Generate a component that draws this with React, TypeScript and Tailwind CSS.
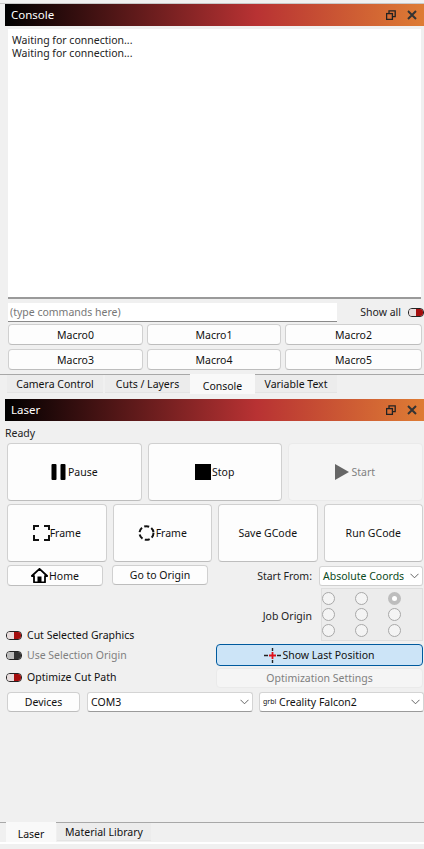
import React from "react";

const font = "[font-family:'Noto_Sans',sans-serif]";

function Header({ title }: { title: string }) {
  return (
    <div className="ml-[5px] h-[22px] flex items-center pl-[6px] pr-[6px] bg-[linear-gradient(90deg,#000000_0%,#b83233_60%,#de7c34_100%)]">
      <span className="text-white text-[11.5px] flex-1">{title}</span>
      <svg width="10" height="10" viewBox="0 0 10 10" className="mr-[11px]" fill="none" stroke="#222" strokeWidth="1.3">
        <rect x="0.6" y="3.6" width="5.8" height="5.8" />
        <path d="M3 3.4V0.8H9.2V6.6H6.6" />
      </svg>
      <svg width="10" height="10" viewBox="0 0 10 10" className="mr-[1px]" fill="none" stroke="#333" strokeWidth="2">
        <path d="M1 1L9 9M9 1L1 9" />
      </svg>
    </div>
  );
}

function Toggle({ off }: { off?: boolean }) {
  return (
    <span className="inline-flex w-[16px] h-[9px] rounded-[4px] border-[1.5px] border-[#222] overflow-hidden shrink-0">
      <span className={`w-[7px] ${off ? "bg-[#bdbdbd]" : "bg-[#e8dcdc]"}`} />
      <span className={`flex-1 ${off ? "bg-[#333]" : "bg-[#a50d0d]"}`} />
    </span>
  );
}

function Btn({ className, children }: { className: string; children: React.ReactNode }) {
  return (
    <div className={`flex items-center justify-center bg-[#fdfdfd] border border-[#d0d0d0] border-b-[#bdbdbd] rounded-[4px] text-[#111] whitespace-nowrap ${className}`}>
      {children}
    </div>
  );
}

function Chevron() {
  return (
    <svg width="9" height="6" viewBox="0 0 9 6" fill="none" stroke="#555" strokeWidth="0.9">
      <path d="M0.5 0.8L4.5 4.8L8.5 0.8" />
    </svg>
  );
}

function Select({ className, children, tone }: { className: string; children: React.ReactNode; tone?: string }) {
  return (
    <div className={`flex items-center justify-between bg-white border border-[#d4d4d4] border-b-[#9a9a9a] rounded-[3px] pl-[3px] pr-[3px] ${tone ?? "text-[#111]"} ${className}`}>
      <span className="whitespace-nowrap">{children}</span>
      <Chevron />
    </div>
  );
}

function Radio({ on }: { on?: boolean }) {
  return on ? (
    <span className="w-[13px] h-[13px] rounded-full bg-[#bdbdbd] flex items-center justify-center">
      <span className="w-[5px] h-[5px] rounded-full bg-white" />
    </span>
  ) : (
    <span className="w-[13px] h-[13px] rounded-full border border-[#a8a8a8] bg-[#f4f4f4]" />
  );
}

export default function App() {
  return (
    <div className={`${font} w-[424px] h-[849px] bg-[#f0f0f0] text-[10.5px] leading-[14px] text-[#111] overflow-hidden`}>
      <div className="h-[4px] border-b border-[#c8c8c8]" />
      <Header title="Console" />

      <div className="ml-[8px] mr-[3px] mt-[3px] h-[270px] bg-white border-b-2 border-[#9a9a9a] pl-[4px] pt-[5px] text-[#222] leading-[13px]">
        <div>Waiting for connection...</div>
        <div>Waiting for connection...</div>
      </div>

      <div className="flex items-center mt-[3px] h-[20px] pl-[8px]">
        <div className="w-[330px] h-[19px] bg-white border-b border-[#8a8a8a] pl-[2px] text-[#777] leading-[18px]">(type commands here)</div>
        <span className="ml-[23px] text-[#222] whitespace-nowrap">Show all</span>
        <span className="ml-[7px]"><Toggle /></span>
      </div>

      <div className="grid grid-cols-[135px_134px_137px] gap-x-[4px] gap-y-[4px] pl-[8px] mt-[2px]">
        {["Macro0", "Macro1", "Macro2", "Macro3", "Macro4", "Macro5"].map((m) => (
          <Btn key={m} className="h-[21px]">{m}</Btn>
        ))}
      </div>

      <div className="mt-[4px] border-t border-[#a8a8a8] h-[20px] flex pl-[7px] items-start">
        <div className="w-[96px] h-[18px] bg-[#ececec] border-b border-[#e4e4e4] flex items-center justify-center mr-[2px]">Camera Control</div>
        <div className="w-[85px] h-[18px] bg-[#ececec] border-b border-[#e4e4e4] flex items-center justify-center">Cuts / Layers</div>
        <div className="w-[65px] h-[20px] -mt-[1px] bg-[#f9f9f9] flex items-center justify-center pt-[3px]">Console</div>
        <div className="w-[82px] h-[18px] bg-[#ececec] border-b border-[#e4e4e4] flex items-center justify-center">Variable Text</div>
      </div>

      <div className="mt-[5px]">
        <Header title="Laser" />
      </div>

      <div className="pl-[5px] mt-[4px] h-[16px] leading-[16px] text-[#222]">Ready</div>

      <div className="flex gap-[6px] pl-[7px] mt-[2px]">
        <Btn className="w-[134.5px] h-[58px] gap-[2px]">
          <svg width="15" height="16" viewBox="0 0 15 16" fill="#000"><rect x="0.5" y="0" width="5" height="16" rx="1" /><rect x="9.5" y="0" width="5" height="16" rx="1" /></svg>
          Pause
        </Btn>
        <Btn className="w-[134.5px] h-[58px] gap-[1px]">
          <svg width="16" height="16" viewBox="0 0 16 16" fill="#000"><rect width="16" height="16" /></svg>
          Stop
        </Btn>
        <div className="w-[134.5px] h-[58px] flex items-center justify-center gap-[2px] bg-[#f5f5f5] rounded-[4px] border border-[#eaeaea] text-[#808080]">
          <svg width="14" height="16" viewBox="0 0 14 16" fill="#666"><path d="M0 0L14 8L0 16Z" /></svg>
          Start
        </div>
      </div>

      <div className="flex gap-[6px] pl-[7px] mt-[3px]">
        <Btn className="w-[99.5px] h-[58px]">
          <svg width="17" height="16" viewBox="0 0 17 16" fill="none" stroke="#111" strokeWidth="2">
            <path d="M1 5V1H6M11 1H16V5M16 10V15H11M6 15H1V10" />
          </svg>
          Frame
        </Btn>
        <Btn className="w-[99.5px] h-[58px]">
          <svg width="17" height="16" viewBox="0 0 17 16" fill="none" stroke="#111" strokeWidth="2" className="mr-[1px]">
            <ellipse cx="8.5" cy="8" rx="7" ry="6.8" strokeDasharray="5 2.5" />
          </svg>
          Frame
        </Btn>
        <Btn className="w-[99.5px] h-[58px]">Save GCode</Btn>
        <Btn className="w-[99.5px] h-[58px]">Run GCode</Btn>
      </div>

      <div className="flex items-center pl-[7px] mt-[3px] h-[21px]">
        <Btn className="w-[96px] h-[21px]">
          <svg width="17" height="15" viewBox="0 0 17 15" className="mr-[1px]">
            <path d="M8.5 0.8L0.8 8H3V14.3H14V8H16.2Z" fill="#fff" stroke="#000" strokeWidth="1.8" strokeLinejoin="round" />
            <rect x="6.5" y="8.5" width="4" height="6" fill="#000" />
          </svg>
          Home
        </Btn>
        <Btn className="w-[96px] h-[20px] ml-[9px] -mt-[1px]">Go to Origin</Btn>
        <span className="w-[104px] text-[#222] text-right whitespace-nowrap">Start From:</span>
        <Select className="ml-[7px] w-[104px] h-[20px] border-b-[#cfcfcf]" tone="text-[#0b4a22]">Absolute Coords</Select>
      </div>

      <div className="flex mt-[2px] h-[99px]">
        <div className="w-[216px] pl-[6px] pt-[39px] shrink-0">
          <div className="flex items-center gap-[5px] h-[16px] text-[#111]"><Toggle />Cut Selected Graphics</div>
          <div className="flex items-center gap-[5px] h-[16px] mt-[4px] text-[#808080]"><Toggle off />Use Selection Origin</div>
          <div className="flex items-center gap-[5px] h-[16px] mt-[6px] text-[#111]"><Toggle />Optimize Cut Path</div>
        </div>
        <div className="flex-1 min-w-0">
          <div className="flex items-center h-[53px]">
            <span className="w-[96px] text-right text-[#222] pt-[2px]">Job Origin</span>
            <div className="ml-[9px] w-[102px] h-[53px] bg-[#ececec] border border-[#dedede] grid grid-cols-[13px_13px_13px] gap-x-[20px] gap-y-[3px] content-start pt-[3px]">
              <Radio /><Radio /><Radio on />
              <Radio /><Radio /><Radio />
              <Radio /><Radio /><Radio />
            </div>
          </div>
          <div className="mt-[3px] w-[207px] h-[22px] flex items-center justify-center bg-[#cce4f7] border border-[#005a9e] rounded-[4px] text-[#111]">
            <svg width="17" height="15" viewBox="0 0 17 15" fill="none" strokeWidth="1.4" className="mr-[1px]">
              <path d="M0 7.5H4M13 7.5H17M8.5 0V3M8.5 12V15" stroke="#222" />
              <path d="M5 7.5H12M8.5 4V11" stroke="#e0101c" strokeWidth="1.8" />
            </svg>
            Show Last Position
          </div>
          <div className="mt-[2px] w-[207px] h-[20px] flex items-center justify-center bg-[#f5f5f5] border border-[#eaeaea] rounded-[4px] text-[#808080]">Optimization Settings</div>
        </div>
      </div>

      <div className="flex items-center pl-[7px] mt-[4px] h-[21px]">
        <Btn className="w-[73px] h-[20px]">Devices</Btn>
        <Select className="ml-[7px] w-[166px] h-[20px]">COM3</Select>
        <Select className="ml-[6px] w-[165px] h-[20px]">
          <span className="text-[7px] align-[2px]">grbl</span> Creality Falcon2
        </Select>
      </div>

      <div className="mt-[110px] h-[19px] border-t border-[#a8a8a8] border-b-2 border-b-white flex pl-[6px] items-start box-content">
        <div className="w-[50px] h-[20px] -mt-[1px] bg-[#f9f9f9] flex items-center justify-center pt-[3px]">Laser</div>
        <div className="w-[94px] h-[18px] ml-[1px] bg-[#ececec] border-b border-[#e4e4e4] flex items-center justify-center">Material Library</div>
      </div>
    </div>
  );
}
